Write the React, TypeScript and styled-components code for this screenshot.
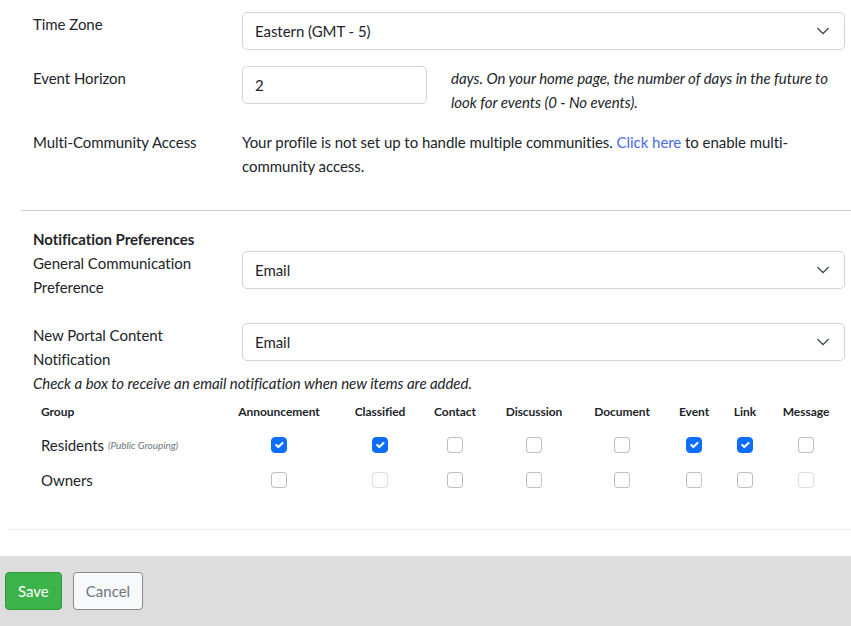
import React from "react";
import styled, { createGlobalStyle } from "styled-components";

const Global = createGlobalStyle`
  html, body { margin: 0; padding: 0; background: #fff; }
  body { font-family: "Lato", "Open Sans", sans-serif; color: #212529; font-size: 15px; letter-spacing: -0.05px; }
  * { box-sizing: border-box; }
`;

const Page = styled.div`
  width: 851px;
  overflow: hidden;
`;

const Content = styled.div<{ $top?: number }>`
  padding: ${(p) => p.$top ?? 12}px 6px 0 33px;
`;

const FormRow = styled.div<{ $mb?: number }>`
  display: grid;
  grid-template-columns: 209px 1fr;
  align-items: start;
  margin-bottom: ${(p) => (p.$mb ?? 16)}px;
`;

const Label = styled.div`
  line-height: 24px;
  color: #212529;
`;

const SelectBox = styled.div`
  height: 38px;
  border: 1px solid #ced4da;
  border-radius: 5px;
  display: flex;
  align-items: center;
  justify-content: space-between;
  padding: 0 14px 0 12px;
  color: #212529;
`;

const InputBox = styled.div`
  flex: 0 0 185px;
  width: 185px;
  height: 38px;
  border: 1px solid #ced4da;
  border-radius: 5px;
  display: flex;
  align-items: center;
  padding: 0 12px;
`;

const InlineField = styled.div`
  display: flex;
  align-items: flex-start;
  gap: 24px;
`;

const Help = styled.div`
  font-style: italic;
  line-height: 24px;
  color: #212529;
`;

const Text = styled.div`
  line-height: 24px;
`;

const Link = styled.a`
  color: #4a6be0;
  text-decoration: none;
`;

const Divider = styled.hr<{ $left: number; $color: string; $top: number; $bottom: number }>`
  border: 0;
  border-top: 1px solid ${(p) => p.$color};
  margin: ${(p) => p.$top}px 0 ${(p) => p.$bottom}px ${(p) => p.$left}px;
`;

const Heading = styled.div`
  font-weight: 700;
  line-height: 24px;
`;

const Note = styled.div`
  font-style: italic;
  line-height: 24px;
`;

const Grid = styled.div`
  display: grid;
  grid-template-columns: 185px 122px 80px 70px 88px 88px 56px 46px 76px;
`;

const HeadCell = styled.div<{ $left?: boolean }>`
  height: 32px;
  display: flex;
  align-items: center;
  justify-content: ${(p) => (p.$left ? "flex-start" : "center")};
  padding: 0 8px;
  font-size: 12px;
  font-weight: 700;
`;

const Cell = styled.div<{ $left?: boolean }>`
  height: 35px;
  display: flex;
  align-items: center;
  justify-content: ${(p) => (p.$left ? "flex-start" : "center")};
  padding: 0 8px;
  padding-top: 1px;
`;

const Sub = styled.span`
  font-size: 10px;
  font-style: italic;
  color: #6c757d;
  margin-left: 4px;
`;

const Box = styled.span<{ $checked?: boolean; $disabled?: boolean }>`
  width: 16px;
  height: 16px;
  border-radius: 4px;
  border: 1px solid ${(p) => (p.$checked ? "#0d6efd" : "rgba(0,0,0,0.25)")};
  background: ${(p) => (p.$checked ? "#0d6efd" : "#fff")};
  opacity: ${(p) => (p.$disabled ? 0.5 : 1)};
  display: inline-flex;
  align-items: center;
  justify-content: center;
`;

const Footer = styled.div`
  background: #dddddd;
  margin-top: 26px;
  height: 70px;
  padding: 16px 5px;
  display: flex;
  gap: 11px;
  align-items: flex-start;
`;

const Button = styled.button<{ $variant: "save" | "cancel" }>`
  height: 38px;
  padding: 0 12px;
  border-radius: 4px;
  font-family: inherit;
  font-size: 15px;
  border: 1px solid ${(p) => (p.$variant === "save" ? "#2e9a3c" : "#8a8a8a")};
  background: ${(p) => (p.$variant === "save" ? "#3db34b" : "#f8f9fa")};
  color: ${(p) => (p.$variant === "save" ? "#fff" : "#6c757d")};
`;

const Chevron = () => (
  <svg width="14" height="14" viewBox="0 0 16 16">
    <path d="M2 5l6 6 6-6" fill="none" stroke="#343a40" strokeWidth="1.6" strokeLinecap="round" strokeLinejoin="round" />
  </svg>
);

const Check = () => (
  <svg width="14" height="14" viewBox="0 0 20 20">
    <path d="M6 10l3 3 6-6" fill="none" stroke="#fff" strokeWidth="3" strokeLinecap="round" strokeLinejoin="round" />
  </svg>
);

const cols = ["Announcement", "Classified", "Contact", "Discussion", "Document", "Event", "Link", "Message"];
const rows: { name: string; sub?: string; checks: boolean[]; disabled: boolean[] }[] = [
  {
    name: "Residents",
    sub: "(Public Grouping)",
    checks: [true, true, false, false, false, true, true, false],
    disabled: [false, false, false, false, false, false, false, false],
  },
  {
    name: "Owners",
    checks: [false, false, false, false, false, false, false, false],
    disabled: [false, true, false, false, false, false, false, true],
  },
];

export default function App() {
  return (
    <Page>
      <Global />
      <Content>
        <FormRow>
          <Label>Time Zone</Label>
          <SelectBox>
            <span>Eastern (GMT - 5)</span>
            <Chevron />
          </SelectBox>
        </FormRow>
        <FormRow>
          <Label>Event Horizon</Label>
          <InlineField>
            <InputBox>2</InputBox>
            <Help>days. On your home page, the number of days in the future to look for events (0 - No events).</Help>
          </InlineField>
        </FormRow>
        <FormRow $mb={0}>
          <Label>Multi-Community Access</Label>
          <Text>
            Your profile is not set up to handle multiple communities. <Link href="#">Click here</Link> to enable multi-community access.
          </Text>
        </FormRow>
      </Content>
      <Divider $left={21} $color="#cccccc" $top={32} $bottom={16} />
      <Content $top={0}>
        <Heading>Notification Preferences</Heading>
        <FormRow $mb={24}>
          <Label>General Communication Preference</Label>
          <SelectBox>
            <span>Email</span>
            <Chevron />
          </SelectBox>
        </FormRow>
        <FormRow $mb={0}>
          <Label>New Portal Content Notification</Label>
          <SelectBox>
            <span>Email</span>
            <Chevron />
          </SelectBox>
        </FormRow>
        <Note>Check a box to receive an email notification when new items are added.</Note>
        <Grid>
          <HeadCell $left>Group</HeadCell>
          {cols.map((c) => (
            <HeadCell key={c}>{c}</HeadCell>
          ))}
          {rows.map((r) => (
            <React.Fragment key={r.name}>
              <Cell $left>
                {r.name}
                {r.sub && <Sub>{r.sub}</Sub>}
              </Cell>
              {r.checks.map((c, i) => (
                <Cell key={i}>
                  <Box $checked={c} $disabled={r.disabled[i]}>{c && <Check />}</Box>
                </Cell>
              ))}
            </React.Fragment>
          ))}
        </Grid>
      </Content>
      <Divider $left={8} $color="#eeeeee" $top={32} $bottom={0} />
      <Footer>
        <Button $variant="save">Save</Button>
        <Button $variant="cancel">Cancel</Button>
      </Footer>
    </Page>
  );
}
